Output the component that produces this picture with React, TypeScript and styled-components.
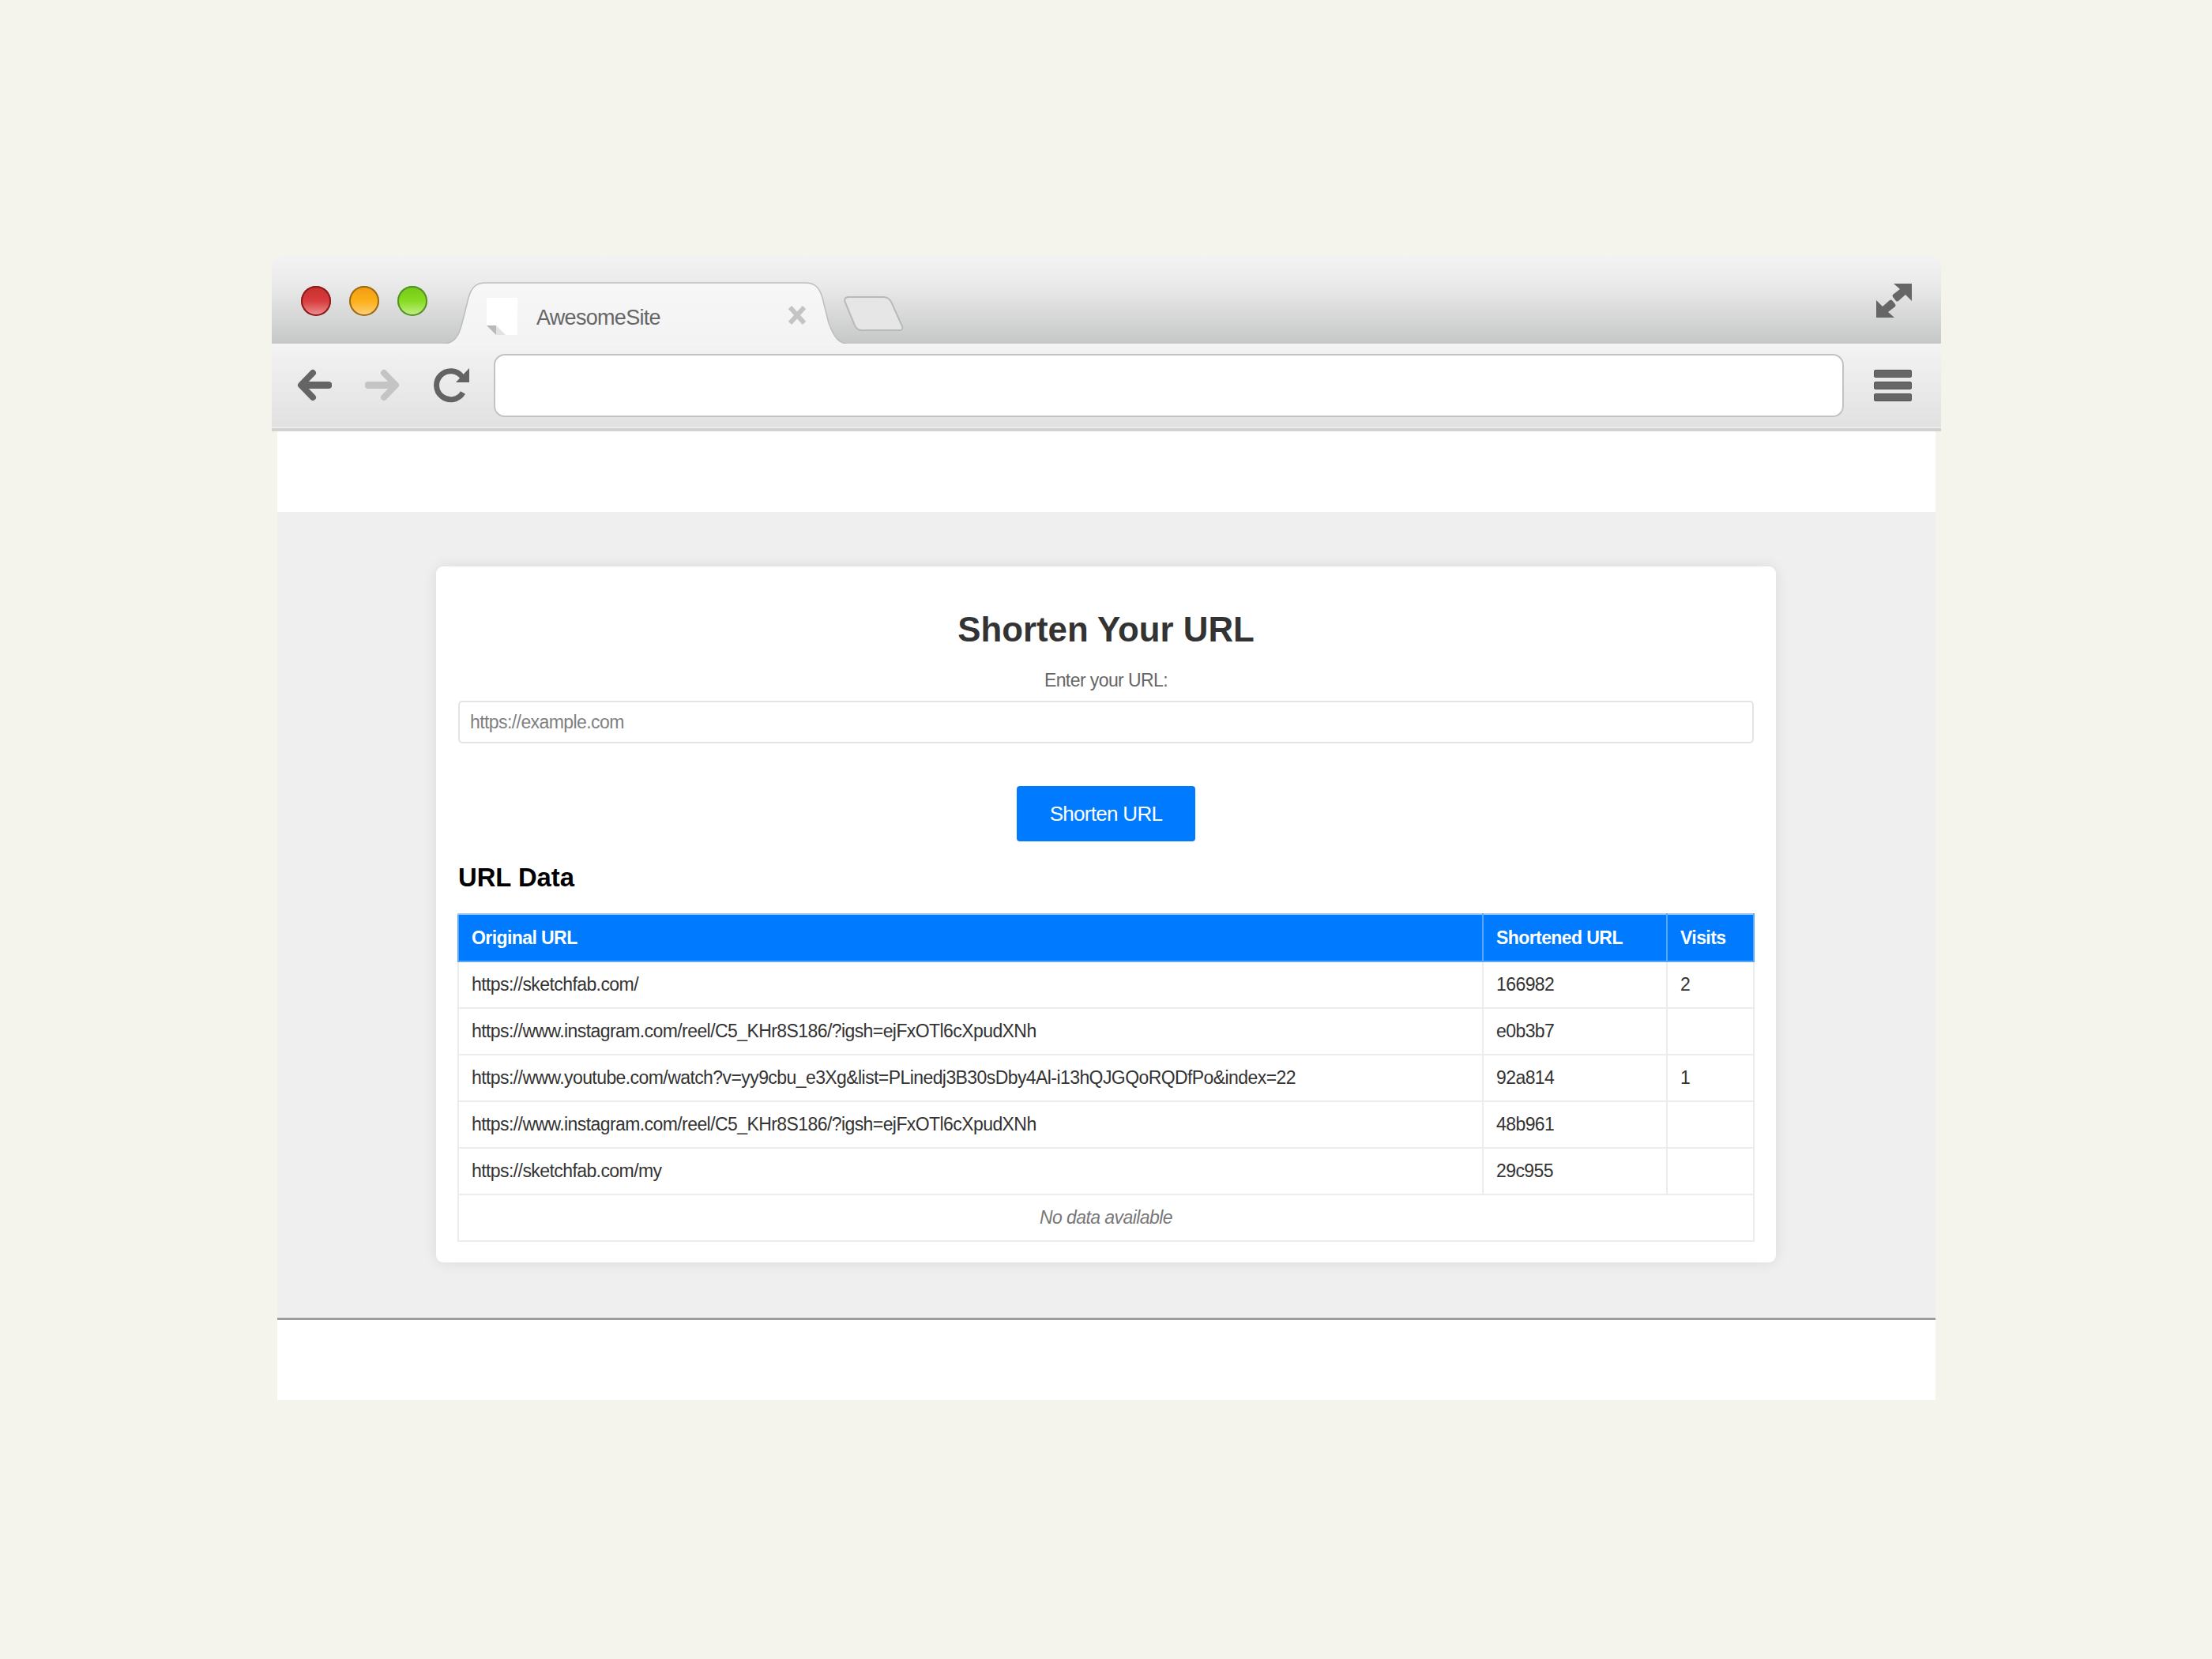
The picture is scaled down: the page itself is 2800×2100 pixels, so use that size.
import React from "react";
import styled, { createGlobalStyle } from "styled-components";

const Global = createGlobalStyle`
  html, body { margin: 0; padding: 0; background: #f4f4ec; }
  body { font-family: "Liberation Sans", Arial, sans-serif; }
  * { box-sizing: border-box; }
`;
const Page = styled.div`
  width: 2800px;
  height: 2100px;
  padding: 325px 0 0 344px;
  background: #f4f4ec;
`;
const Frame = styled.div`
  width: 2113px;
`;
const TabStrip = styled.div`
  height: 110px;
  display: flex;
  align-items: flex-start;
  border-radius: 10px 10px 0 0;
  background: linear-gradient(#f2f2f2, #ebebeb 30%, #d3d4d4 75%, #c6c7c7);
`;
const Lights = styled.div`
  display: flex;
  gap: 23px;
  margin: 37px 0 0 37px;
`;
const palette = {
  red: { fill: "#c92e2e, #d83c3c 50%, #e87a7a 85%, #e89a9a", rim: "#8a1c1c" },
  amber: { fill: "#ef9c10, #fdb01a 50%, #fdc860 85%, #fdd890", rim: "#9a6a1c" },
  green: { fill: "#74c818, #88dc22 50%, #b4ea6e 85%, #c6f090", rim: "#54902a" },
};
const Light = styled.div<{ $c: keyof typeof palette }>`
  width: 38px;
  height: 38px;
  border-radius: 50%;
  background: linear-gradient(${(p) => palette[p.$c].fill});
  box-shadow: inset 0 0 0 2px ${(p) => palette[p.$c].rim};
`;
const Tab = styled.div`
  position: relative;
  width: 512px;
  height: 78px;
  margin: 32px 0 0 20px;
  padding: 20px 52px 0 55px;
  display: flex;
  align-items: flex-start;
`;
const TabShape = styled.svg`
  position: absolute;
  inset: 0;
`;
const Favicon = styled.svg`
  position: relative;
  flex: none;
`;
const TabTitle = styled.span`
  position: relative;
  margin: 9px 0 0 24px;
  font-size: 27px;
  letter-spacing: -0.7px;
  line-height: 32px;
  color: #666;
`;
const CloseIcon = styled.svg`
  position: relative;
  margin: 10px 0 0 auto;
`;
const NewTab = styled.svg`
  flex: none;
  margin: 50px 0 0 -5px;
`;
const Expand = styled.svg`
  flex: none;
  margin: 33px 37px 0 auto;
`;
const Toolbar = styled.div`
  height: 111px;
  display: flex;
  align-items: flex-start;
  background: linear-gradient(#f3f3f3, #e1e1e1);
  border-top: 1px solid #f7f7f7;
  border-bottom: 4px solid #d2d2cc;
  box-shadow: inset 0 -1px 0 #f2f2f2;
`;
const NavIcon = styled.svg<{ $l: number; $t: number }>`
  flex: none;
  margin: ${(p) => p.$t}px 0 0 ${(p) => p.$l}px;
`;
const AddressBar = styled.div`
  flex: 1;
  height: 80px;
  margin: 12px 0 0 30px;
  background: #fff;
  border: 2px solid #c2c2c2;
  border-radius: 14px;
`;
const Menu = styled.div`
  width: 48px;
  margin: 32px 37px 0 38px;
  display: flex;
  flex-direction: column;
  gap: 5px;
`;
const MenuBar = styled.div`
  height: 10px;
  border-radius: 2px;
  background: #676767;
  border: 1px solid #555;
`;
const Viewport = styled.div`
  margin: 0 7px;
  background: #fff;
`;
const WhiteBand = styled.div<{ $h: number }>`
  height: ${(p) => p.$h}px;
  background: #fff;
`;
const Main = styled.main`
  height: 1023px;
  padding-top: 69px;
  background: #efefef;
  border-bottom: 3px solid #9c9c9c;
`;
const Card = styled.section`
  width: 1696px;
  height: 881px;
  margin: 0 0 0 201px;
  padding: 0 28px;
  background: #fff;
  border-radius: 9px;
  box-shadow: 0 0 18px rgba(0, 0, 0, 0.09);
`;
const Title = styled.h1`
  margin: 0;
  padding-top: 54px;
  font-size: 43.8px;
  line-height: 52px;
  font-weight: 700;
  text-align: center;
  color: #333;
`;
const Label = styled.label`
  display: block;
  margin-top: 24px;
  font-size: 23px;
  letter-spacing: -0.58px;
  line-height: 28px;
  text-align: center;
  color: #666;
`;
const UrlInput = styled.input`
  display: block;
  width: 100%;
  height: 54px;
  margin-top: 12px;
  padding: 0 13px;
  border: 2px solid #e4e4e4;
  border-radius: 5px;
  background: #fff;
  font-family: inherit;
  font-size: 23px;
  letter-spacing: -0.58px;
  &::placeholder { color: #808080; opacity: 1; }
`;
const ButtonRow = styled.div`
  display: flex;
  justify-content: center;
  margin-top: 54px;
`;
const Button = styled.button`
  width: 226px;
  height: 70px;
  border: 0;
  border-radius: 4px;
  background: #007bff;
  color: #fff;
  font-family: inherit;
  font-size: 26px;
  letter-spacing: -0.7px;
`;
const Heading = styled.h2`
  margin: 27px 0 0;
  font-size: 32.8px;
  line-height: 38px;
  font-weight: 700;
  color: #000;
`;
const Table = styled.table`
  width: 1640px;
  margin: 26px 0 0 -1px;
  border-collapse: collapse;
  table-layout: fixed;
  font-size: 23px;
  letter-spacing: -0.58px;
  color: #333;
`;
const HeadCell = styled.th<{ $w: number }>`
  width: ${(p) => p.$w}px;
  height: 60px;
  padding: 0 16px;
  background: #007bff;
  border: 2px solid #5aa7f7;
  border-top-color: #9cc8f8;
  color: #fff;
  font-weight: 700;
  text-align: left;
`;
const Cell = styled.td`
  height: 59px;
  padding: 0 16px;
  border: 2px solid #ececec;
  white-space: nowrap;
`;
const EmptyCell = styled(Cell)`
  text-align: center;
  font-style: italic;
  color: #777;
`;

const rows = [
  ["https://sketchfab.com/", "166982", "2"],
  ["https://www.instagram.com/reel/C5_KHr8S186/?igsh=ejFxOTl6cXpudXNh", "e0b3b7", ""],
  ["https://www.youtube.com/watch?v=yy9cbu_e3Xg&list=PLinedj3B30sDby4Al-i13hQJGQoRQDfPo&index=22", "92a814", "1"],
  ["https://www.instagram.com/reel/C5_KHr8S186/?igsh=ejFxOTl6cXpudXNh", "48b961", ""],
  ["https://sketchfab.com/my", "29c955", ""],
];

const Arrow = ({ color, flip }: { color: string; flip?: boolean }) => (
  <g transform={flip ? "translate(45 0) scale(-1 1)" : undefined} fill="none" stroke={color} strokeLinecap="round" strokeLinejoin="round">
    <path d="M21 5 L6 20.5 L21 36" strokeWidth="8" />
    <path d="M8 20.5 H41" strokeWidth="9" />
  </g>
);

export default function App() {
  return (
    <Page>
      <Global />
      <Frame>
        <TabStrip>
          <Lights>
            <Light $c="red" />
            <Light $c="amber" />
            <Light $c="green" />
          </Lights>
          <Tab>
            <TabShape width="512" height="78" viewBox="0 0 512 78">
              <defs>
                <linearGradient id="tabfill" x1="0" y1="0" x2="0" y2="1">
                  <stop offset="0" stopColor="#f7f7f7" />
                  <stop offset="1" stopColor="#f3f3f3" />
                </linearGradient>
              </defs>
              <path d="M0 78 C14 78 20 68 24 52 L32 20 C36 6 42 1 54 1 H458 C470 1 476 6 480 20 L488 52 C494 68 500 78 512 78 Z" fill="url(#tabfill)" />
              <path d="M0 78 C14 78 20 68 24 52 L32 20 C36 6 42 1 54 1 H458 C470 1 476 6 480 20 L488 52 C494 68 500 78 512 78" fill="none" stroke="#bdbdbd" strokeWidth="1.5" />
            </TabShape>
            <Favicon width="39" height="47" viewBox="0 0 39 47">
              <path d="M0 0 H39 V47 H24 L12 35 H0 Z" fill="#fff" />
              <path d="M0 35 H12 V47 Z" fill="#b9b9b9" />
              <path d="M12 35 L24 47 H12 Z" fill="#e2e2e2" />
            </Favicon>
            <TabTitle>AwesomeSite</TabTitle>
            <CloseIcon width="24" height="24" viewBox="0 0 24 24">
              <path d="M3 2 L21 22 M21 2 L3 22" stroke="#c4c4c4" strokeWidth="6" />
            </CloseIcon>
          </Tab>
          <NewTab width="76" height="44" viewBox="0 0 76 44">
            <path d="M6 1 H50 C56 1 59 4 61 9 L74 38 C75 41 74 43 71 43 H22 C18 43 16 41 14 37 L2 8 C0 4 2 1 6 1 Z" fill="#e6e6e6" stroke="#b9b9b9" strokeWidth="2" />
          </NewTab>
          <Expand width="45" height="45" viewBox="0 0 45 45">
            <path d="M22 1 H45 V23 L37 15 L28 23 Q26 24 25 23 L21 18 Q20 16 21 15 L30 8 Z" fill="#666" />
            <path d="M23 44 H0 V22 L8 30 L17 22 Q19 21 20 22 L24 27 Q25 29 24 30 L15 37 Z" fill="#666" />
          </Expand>
        </TabStrip>
        <Toolbar>
          <NavIcon $l={31} $t={31} width="45" height="41" viewBox="0 0 45 41">
            <Arrow color="#656565" />
          </NavIcon>
          <NavIcon $l={42} $t={31} width="45" height="41" viewBox="0 0 45 41">
            <Arrow color="#c4c4c4" flip />
          </NavIcon>
          <NavIcon $l={42} $t={30} width="46" height="45" viewBox="0 0 46 45">
            <path d="M36 11 A18 18 0 1 0 37 31" fill="none" stroke="#636363" strokeWidth="7" />
            <path d="M45 0 V18 H28 Z" fill="#636363" />
          </NavIcon>
          <AddressBar />
          <Menu>
            <MenuBar />
            <MenuBar />
            <MenuBar />
          </Menu>
        </Toolbar>
        <Viewport>
          <WhiteBand $h={102} />
          <Main>
            <Card>
              <Title>Shorten Your URL</Title>
              <Label htmlFor="url">Enter your URL:</Label>
              <UrlInput id="url" placeholder="https://example.com" />
              <ButtonRow>
                <Button>Shorten URL</Button>
              </ButtonRow>
              <Heading>URL Data</Heading>
              <Table>
                <thead>
                  <tr>
                    <HeadCell $w={1297}>Original URL</HeadCell>
                    <HeadCell $w={233}>Shortened URL</HeadCell>
                    <HeadCell $w={110}>Visits</HeadCell>
                  </tr>
                </thead>
                <tbody>
                  {rows.map((r, i) => (
                    <tr key={i}>
                      {r.map((c, j) => (
                        <Cell key={j}>{c}</Cell>
                      ))}
                    </tr>
                  ))}
                  <tr>
                    <EmptyCell colSpan={3}>No data available</EmptyCell>
                  </tr>
                </tbody>
              </Table>
            </Card>
          </Main>
          <WhiteBand $h={101} />
        </Viewport>
      </Frame>
    </Page>
  );
}
